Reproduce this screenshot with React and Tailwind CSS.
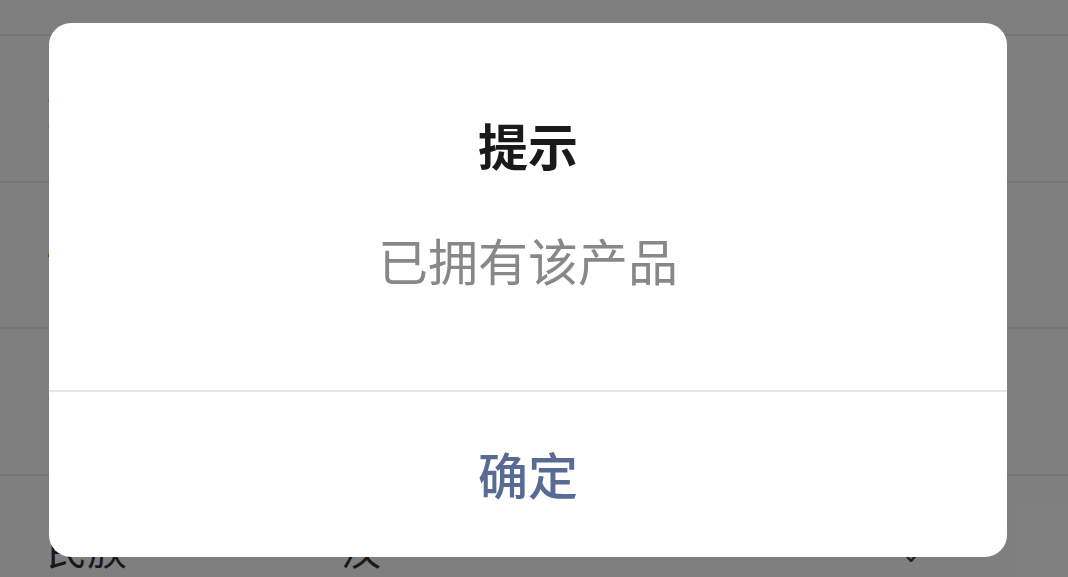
import { useState } from 'react'

const rows = [
  { label: '姓名', value: '' },
  { label: '性别', value: '' },
  { label: '证件', value: '' },
  { label: '民族', value: '汉', select: true },
]

export default function App() {
  const [open, setOpen] = useState(true)

  return (
    <div
      className="relative w-full h-[577px] overflow-hidden bg-white"
      style={{ fontFamily: '"Noto Sans CJK SC", "Noto Sans", sans-serif' }}
    >
      {/* Form underneath */}
      <div className="flex flex-col">
        <div className="h-[36px] border-b-2 border-[#ededed]" />
        {rows.map((row, idx) => (
          <div
            key={idx}
            className="h-[146.7px] flex items-center px-[47px] border-b-2 border-[#ededed] text-[40px] text-[#333]"
          >
            <span className="w-[296px]">{row.label}</span>
            <span className="flex-1 -ml-[2px]">{row.value}</span>
            {row.select && (
              <svg width="16" height="10" viewBox="0 0 16 10" className="mr-[102px] mt-[18px]">
                <path d="M1 1 L8 9 L15 1" fill="none" stroke="#444" strokeWidth="2.5" />
              </svg>
            )}
          </div>
        ))}
      </div>

      {/* Dialog */}
      {open && (
        <div className="absolute inset-0 bg-black/50 flex items-start pt-[23px] pl-[49px]">
          <div className="w-[958px] h-[534px] bg-white rounded-[22px] overflow-hidden flex flex-col">
            <div className="h-[367px] pb-[10px] flex flex-col items-center justify-center gap-[45px]">
              <h2 className="text-[50px] leading-[70px] font-bold text-[#1a1a1a]">提示</h2>
              <p className="text-[50px] leading-[70px] text-[#888888]">已拥有该产品</p>
            </div>
            <div className="h-[2px] bg-[#e5e5e5]" />
            <button
              onClick={() => setOpen(false)}
              className="flex-1 pb-[3px] flex items-center justify-center text-[50px] font-medium text-[#576b95]"
            >
              确定
            </button>
          </div>
        </div>
      )}
    </div>
  )
}
